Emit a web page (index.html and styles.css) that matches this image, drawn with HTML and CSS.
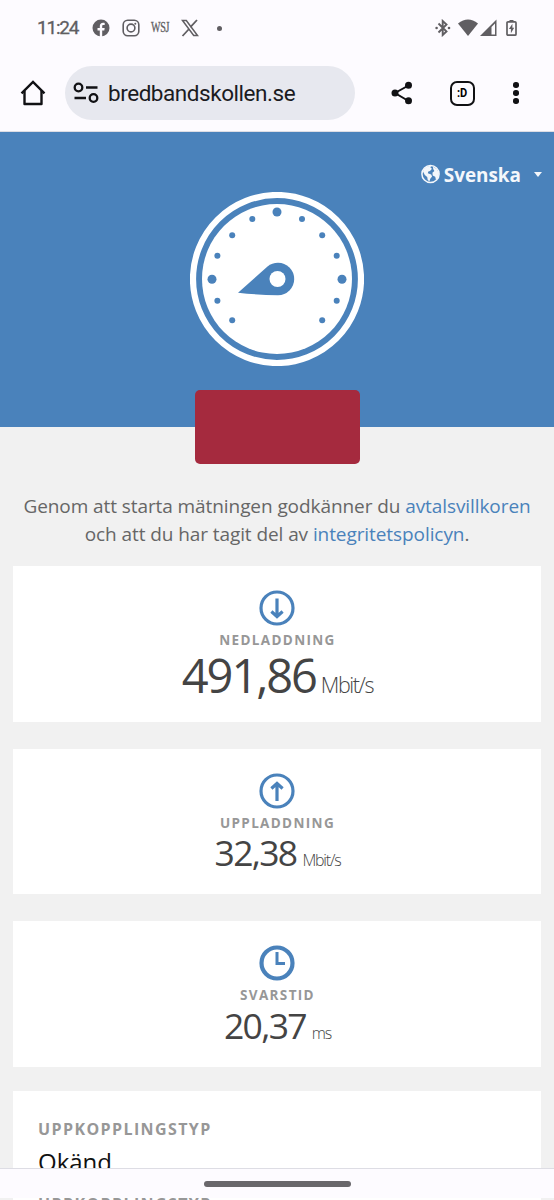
FILE: index.html
```html
<!DOCTYPE html>
<html lang="sv">
<head>
  <meta charset="UTF-8">
  <meta name="viewport" content="width=device-width, initial-scale=1.0">
  <title>Bredbandskollen</title>
  <link rel="stylesheet" href="styles.css">
</head>
<body>
  <div class="status-bar">
    <span class="clock">11:24</span>
    <svg class="fb" width="18" height="18" viewBox="0 0 18 18">
      <circle cx="9" cy="9" r="8.500" fill="#605e62"/>
      <path d="M7.800 18v-6.500H5.500V9h2.300V7.300c0-2.300 1.200-3.500 3.300-3.500.7 0 1.300.1 1.600.2v2.100h-1.200c-1 0-1.300.5-1.300 1.300V9h2.500l-.4 2.500h-2.100V18z" fill="#fdfbff"/>
    </svg>
    <svg class="ig" width="18" height="18" viewBox="0 0 18 18" fill="none" stroke="#605e62" stroke-width="1.600">
      <rect x="1.200" y="1.200" width="15.600" height="15.600" rx="4.500"/>
      <circle cx="9" cy="9" r="3.900"/>
      <circle cx="13.300" cy="4.700" r="1" fill="#605e62" stroke="none"/>
    </svg>
    <span class="wsj">WSJ</span>
    <svg class="x-logo" width="18" height="18" viewBox="0 0 18 18" fill="none" stroke="#605e62">
      <path d="M1.500 1.500h3.800l11.200 15h-3.800z" stroke-width="1.500"/>
      <path d="M16 1l-6.600 7.200M8 10l-6.500 7" stroke-width="1.800"/>
    </svg>
    <span class="more-dot"></span>
    <span class="spacer"></span>
    <svg class="bluetooth" width="16" height="18" viewBox="0 0 16 18" fill="none" stroke="#605e62" stroke-width="1.900">
      <path d="M3.500 4.500l8 8L7.700 16V2l3.800 3.500-8 8"/>
      <circle cx="1.600" cy="9" r="1.300" fill="#605e62" stroke="none"/>
      <circle cx="14" cy="9" r="1.300" fill="#605e62" stroke="none"/>
    </svg>
    <svg class="wifi" width="20" height="18" viewBox="0 0 20 18">
      <path d="M0 4.500Q10-3.300 20 4.500L10 17z" fill="#605e62"/>
    </svg>
    <svg class="signal" width="17" height="18" viewBox="0 0 17 18">
      <path d="M0 17L16.500 .5V17z" fill="#605e62"/>
      <path d="M11.500 8L15 4.500V15.500H11.500z" fill="#fdfbff"/>
    </svg>
    <svg class="battery" width="11" height="18" viewBox="0 0 11 18">
      <path d="M3.500 1h4v2h-4z" fill="#605e62"/>
      <rect x="1" y="2.800" width="9" height="13.400" rx="1" fill="none" stroke="#605e62" stroke-width="1.700"/>
      <path d="M6.400 4.800L2.900 10h2v4.200L8.200 8.800h-1.800z" fill="#605e62"/>
    </svg>
  </div>

  <div class="toolbar">
    <svg class="home" width="26" height="26" viewBox="0 0 26 26" fill="none" stroke="#111114" stroke-width="2.400" stroke-linejoin="round">
      <path d="M4.500 11v13h17V11"/>
      <path d="M1.500 13.300L13 2l11.500 11.300" stroke-linejoin="miter"/>
    </svg>
    <div class="address">
      <svg width="26" height="22" viewBox="0 0 26 22" fill="none" stroke="#111114" stroke-width="2.300">
        <circle cx="5.500" cy="5.500" r="3.800"/>
        <path d="M13 5.500h11.500M1.500 16H13"/>
        <circle cx="20.500" cy="16" r="3.800"/>
      </svg>
      <span class="url">bredbandskollen.se</span>
    </div>
    <svg class="share" width="22" height="24" viewBox="0 0 22 24">
      <path d="M17.500 4.500L4 12l13.500 8" fill="none" stroke="#111114" stroke-width="2"/>
      <circle cx="17.500" cy="4.200" r="3.500" fill="#111114"/>
      <circle cx="4" cy="12" r="3.500" fill="#111114"/>
      <circle cx="17.500" cy="19.800" r="3.500" fill="#111114"/>
    </svg>
    <div class="tabs"><span>:D</span></div>
    <div class="menu"><i></i><i></i><i></i></div>
  </div>

  <div class="hero">
    <div class="language">
      <svg width="19" height="20" viewBox="0 0 19 20">
        <circle cx="9.500" cy="10" r="8.600" fill="none" stroke="#f4f7fb" stroke-width="1.500"/>
        <path d="M2.500 5.500L6 2.500l4-.8-.5 2 1.500 1L9 7 7.300 7.500 6.800 9.300l3.400 1.300.9 2-1.800 2.200-.8 2.500-1.700-1-.6-3.300-2.400-2L2 7.500zM12 2.500l4 2.800 2 4.200-1 4-2 2.500-.8-3.200-2.500-1.300-.3-2.800 2-1.700-1.200-2z" fill="#f4f7fb"/>
      </svg>
      <span>Svenska</span>
      <i class="caret"></i>
    </div>
    <svg class="gauge" width="174" height="174" viewBox="0 0 174 174">
      <circle cx="87" cy="87" r="84" fill="none" stroke="#fff" stroke-width="6.200"/>
      <circle cx="87" cy="87" r="75" fill="#fff"/>
      <g fill="#4a82bb">
        <circle cx="87" cy="20" r="4.500"/>
        <circle cx="22" cy="87.300" r="4.500"/>
        <circle cx="152" cy="87.300" r="4.500"/>
        <circle cx="62.300" cy="27" r="3"/>
        <circle cx="112" cy="27" r="3"/>
        <circle cx="42.200" cy="43.300" r="3"/>
        <circle cx="132.200" cy="43.300" r="3"/>
        <circle cx="27.400" cy="63.700" r="3"/>
        <circle cx="146.700" cy="63.700" r="3"/>
        <circle cx="27.400" cy="108.700" r="3"/>
        <circle cx="146.700" cy="108.700" r="3"/>
        <circle cx="42.200" cy="128.200" r="3"/>
        <circle cx="132.200" cy="128.200" r="3"/>
        <path d="M48 100.700L77.500 74.500Q82 70.800 88 70.800A16.200 16.200 0 0 1 88 103.200Q68 103 48 100.700z"/>
      </g>
      <circle cx="87.500" cy="87" r="8" fill="#fff"/>
    </svg>
    <button class="start" aria-label="Starta"></button>
  </div>

  <div class="content">
    <p class="terms">
      Genom att starta mätningen godkänner du <a>avtalsvillkoren</a><br>
      och att du har tagit del av <a>integritetspolicyn</a>.
    </p>

    <div class="card download">
      <svg width="36" height="36" viewBox="0 0 36 36" fill="none" stroke="#4a82bb" stroke-width="3.200">
        <circle cx="18" cy="18" r="16"/>
        <path d="M18 8.500v18M12.400 21.500l5.600 5 5.600-5"/>
      </svg>
      <h2>Nedladdning</h2>
      <div class="result"><span class="value">491,86</span><span class="unit">Mbit/s</span></div>
    </div>

    <div class="card upload">
      <svg width="36" height="36" viewBox="0 0 36 36" fill="none" stroke="#4a82bb" stroke-width="3.200">
        <circle cx="18" cy="18" r="16"/>
        <path d="M18 28V10M12.400 15.500l5.600-5 5.600 5"/>
      </svg>
      <h2>Uppladdning</h2>
      <div class="result"><span class="value">32,38</span><span class="unit">Mbit/s</span></div>
    </div>

    <div class="card latency">
      <svg width="36" height="36" viewBox="0 0 36 36" fill="none" stroke="#4a82bb">
        <circle cx="18" cy="18" r="15.500" stroke-width="4.200"/>
        <path d="M18 7v11.500h8" stroke-width="3"/>
      </svg>
      <h2>Svarstid</h2>
      <div class="result"><span class="value">20,37</span><span class="unit">ms</span></div>
    </div>

    <div class="card connection">
      <h3>Uppkopplingstyp</h3>
      <div class="type">Okänd</div>
    </div>
  </div>

  <div class="nav-bar"><div class="handle"></div></div>
  <div class="next"><h3>Uppkopplingstyp</h3></div>
</body>
</html>
```

FILE: styles.css
```css
* {
  box-sizing: border-box;
}
body {
  margin: 0;
  width: 554px;
  height: 1200px;
  overflow: hidden;
  display: flex;
  flex-direction: column;
  font-family: "Open Sans", sans-serif;
  background: #f1f1f1;
}
svg {
  display: block;
  flex: none;
}
h2, h3, p {
  margin: 0;
}
.status-bar {
  height: 56px;
  flex: none;
  display: flex;
  align-items: center;
  padding: 0 37px;
  background: #fdfbff;
  color: #605e62;
}
.clock {
  width: 55px;
  font: 19px/20px Roboto, sans-serif;
  letter-spacing: -1.2px;
  -webkit-text-stroke: 0.3px #605e62;
}
.ig {
  margin-left: 12px;
}
.wsj {
  width: 19px;
  margin: 0 11px;
  font: 14px/18px "Liberation Serif", serif;
  letter-spacing: -0.5px;
  white-space: nowrap;
  transform: scaleX(0.72);
  transform-origin: left;
  -webkit-text-stroke: 0.3px #605e62;
}
.more-dot {
  width: 5px;
  height: 5px;
  margin-left: 18px;
  border-radius: 50%;
  background: #605e62;
}
.spacer {
  flex: 1;
}
.wifi {
  margin-left: 7px;
}
.signal {
  margin: 0 9px 0 2px;
}
.toolbar {
  height: 76px;
  flex: none;
  display: flex;
  align-items: center;
  padding: 0 35px 1px 20px;
  background: #fdfbff;
  border-bottom: 1px solid #dddde4;
}
.address {
  width: 290px;
  height: 54px;
  margin-left: 19px;
  padding-left: 8px;
  border-radius: 27px;
  background: #e7e8ef;
  display: flex;
  align-items: center;
  gap: 9px;
}
.url {
  font: 22.5px/30px Roboto, sans-serif;
  letter-spacing: -0.45px;
  color: #1b1b1f;
}
.share {
  margin-left: 36px;
}
.tabs {
  width: 25px;
  height: 25px;
  margin-left: 37px;
  border: 2.5px solid #111114;
  border-radius: 7px;
  display: flex;
  justify-content: center;
  font: bold 13px/20px Roboto, sans-serif;
}
.tabs span {
  transform: scaleX(0.85);
}
.menu {
  margin-left: 38px;
  display: flex;
  flex-direction: column;
  gap: 2.5px;
}
.menu i {
  width: 5.5px;
  height: 5.5px;
  border-radius: 50%;
  background: #111114;
}
.hero {
  height: 295px;
  flex: none;
  display: flex;
  flex-direction: column;
  align-items: center;
  padding-top: 30px;
  background: #4a82bb;
}
.language {
  align-self: flex-end;
  height: 24px;
  margin-right: 12px;
  display: flex;
  align-items: center;
  color: #f4f7fb;
  font-size: 18.9px;
  font-weight: 700;
}
.language span {
  margin-left: 4px;
  padding-top: 2px;
}
.caret {
  margin-left: 13px;
  border: 4px solid transparent;
  border-top: 5px solid #f4f7fb;
  border-bottom: 0;
}
.gauge {
  margin-top: 6px;
}
.start {
  width: 165px;
  height: 74px;
  flex: none;
  margin: 24px 0 0 1px;
  padding: 0;
  border: 0;
  border-radius: 5px;
  background: #a52a3e;
  z-index: 1;
}
.content {
  height: 741px;
  flex: none;
  padding: 65px 13px 0;
  overflow: hidden;
}
.terms {
  height: 74px;
  color: #666;
  font-size: 19px;
  line-height: 28px;
  letter-spacing: -0.08px;
  text-align: center;
  white-space: nowrap;
}
.terms a {
  color: #4a82bb;
}
.card {
  background: #fff;
  display: flex;
  flex-direction: column;
  align-items: center;
}
.card h2 {
  margin-top: 4px;
  padding-left: 1px;
  color: #979797;
  font-size: 13.5px;
  line-height: 20px;
  letter-spacing: 1.35px;
  text-transform: uppercase;
}
.result {
  display: flex;
  align-items: baseline;
  color: #444;
  white-space: nowrap;
}
.unit {
  font-weight: 300;
}
.download {
  height: 156px;
  margin-bottom: 27px;
  padding-top: 24px;
}
.download .result {
  margin-left: 1px;
}
.download .value {
  font-size: 47px;
  line-height: 51px;
  letter-spacing: -2.1px;
}
.download .unit {
  margin-left: 5px;
  font-size: 21.5px;
  letter-spacing: -1.4px;
}
.upload, .latency {
  height: 145px;
  margin-bottom: 27px;
  padding-top: 24px;
}
.upload .value, .latency .value {
  font-size: 35.5px;
  line-height: 40px;
  letter-spacing: -1.7px;
}
.upload .value {
  line-height: 38px;
}
.upload .unit, .latency .unit {
  margin-left: 6px;
  font-size: 16px;
  letter-spacing: -1.2px;
}
.upload .result, .latency .result {
  margin-left: 1px;
}
.latency {
  height: 146px;
  margin-bottom: 24px;
}
.connection {
  height: 78px;
  padding: 26px 25px 0;
  align-items: flex-start;
}
h3 {
  color: #979797;
  font-size: 16px;
  line-height: 24px;
  letter-spacing: 1.4px;
  text-transform: uppercase;
}
.type {
  margin-top: 5px;
  font-size: 24px;
  line-height: 32px;
  color: #111;
}
.nav-bar {
  height: 30px;
  flex: none;
  padding-top: 12px;
  background: #fdfbff;
  border-top: 1px solid #dddde4;
}
.handle {
  width: 147px;
  height: 6px;
  margin: 0 auto;
  border-radius: 3px;
  background: #69676b;
}
.next {
  height: 2px;
  margin: 0 13px;
  padding-left: 25px;
  overflow: hidden;
  background: #fff;
}
.next h3 {
  margin-top: -6px;
}
```
